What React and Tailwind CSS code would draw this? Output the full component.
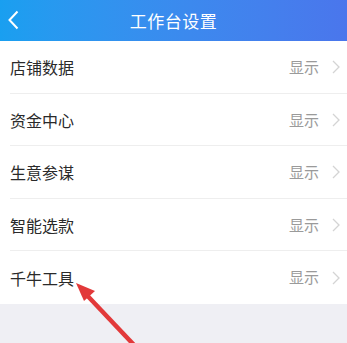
import React from 'react';

const rows = ['店铺数据', '资金中心', '生意参谋', '智能选款', '千牛工具'];

const App = () => {
  return (
    <div className="w-[347px] h-[343px] overflow-hidden relative bg-[#efeff4] font-['Noto_Sans_CJK_SC',sans-serif]">
      {/* header */}
      <div className="h-[41px] flex items-center relative bg-gradient-to-r from-[#199ff0] to-[#4a76ec]">
        <svg className="absolute left-[7px] top-[10px]" width="12" height="20" viewBox="0 0 12 20">
          <path d="M10.5 1.5 L2.5 10 L10.5 18.5" fill="none" stroke="#fff" strokeWidth="2" />
        </svg>
        <div className="flex-1 text-center text-white text-[17px] tracking-[0.5px]">工作台设置</div>
      </div>

      {/* list */}
      <div className="bg-white">
        {rows.map((label, i) => (
          <div key={label} className="h-[52.6px] flex items-center pl-[10px] relative">
            <span className="text-[16px] text-[#2a2a2a] flex-1">{label}</span>
            <span className="text-[15px] text-[#9a9a9a] mr-[13px]">显示</span>
            <svg className="mr-[7px]" width="8" height="14" viewBox="0 0 8 14">
              <path d="M1 1 L7 7 L1 13" fill="none" stroke="#d4d4d4" strokeWidth="1.3" />
            </svg>
            {i < rows.length - 1 && (
              <div className="absolute left-[10px] right-0 bottom-0 h-px bg-[#eeeeee]" />
            )}
          </div>
        ))}
      </div>

      {/* red arrow annotation */}
      <svg className="absolute left-0 top-0 pointer-events-none" width="347" height="343" viewBox="0 0 347 343">
        <line x1="134" y1="345" x2="82" y2="290" stroke="#e2393a" strokeWidth="4.5" />
        <polygon points="76,283 95,291 84,301" fill="#e2393a" />
      </svg>
    </div>
  );
};

export default App;
